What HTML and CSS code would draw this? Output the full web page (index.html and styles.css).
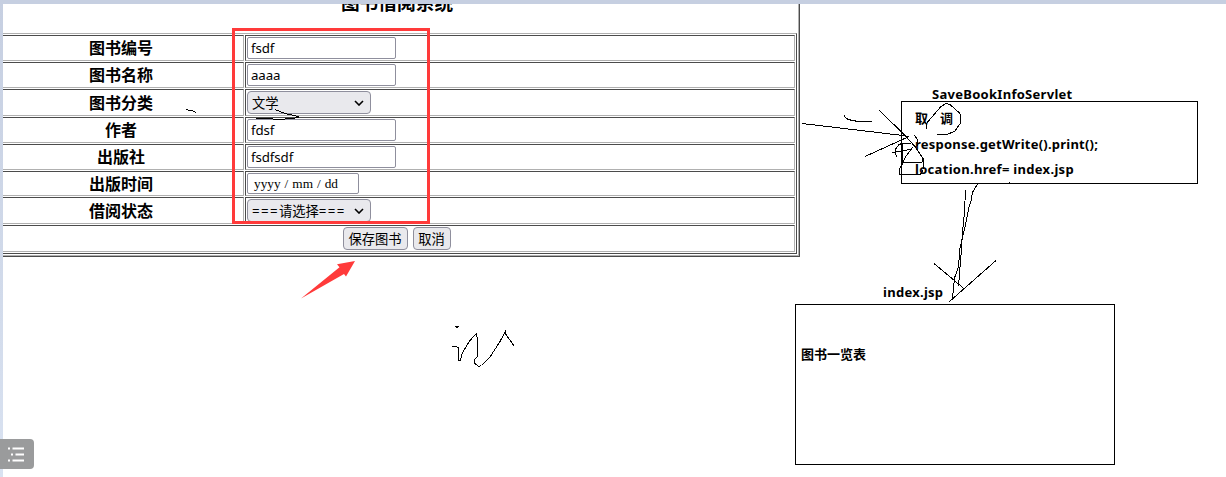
FILE: index.html
```
<!DOCTYPE html>
<html lang="zh-CN">
<head>
<meta charset="utf-8">
<title>图书借阅系统</title>
<link rel="stylesheet" href="styles.css">
</head>
<body>
<div class="screen">
  <main class="form-panel">
    <h3 class="title">图书借阅系统</h3>
    <table class="book-table">
      <colgroup><col class="label-col"><col></colgroup>
      <tr class="h26"><th>图书编号</th><td><div class="field input">fsdf</div></td></tr>
      <tr class="h26"><th>图书名称</th><td><div class="field input">aaaa</div></td></tr>
      <tr class="h27"><th>图书分类</th><td><div class="field select"><span>文学</span><svg class="chevron" viewBox="0 0 10 6"><path d="M1 1l4 4 4-4"/></svg></div></td></tr>
      <tr class="h26"><th>作者</th><td><div class="field input">fdsf</div></td></tr>
      <tr class="h26"><th>出版社</th><td><div class="field input">fsdfsdf</div></td></tr>
      <tr class="h25"><th>出版时间</th><td><div class="field date"><span>yyyy</span><span>/</span><span>mm</span><span>/</span><span>dd</span></div></td></tr>
      <tr class="h27"><th>借阅状态</th><td><div class="field select"><span><span class="dashes">===</span>请选择<span class="dashes">===</span></span><svg class="chevron" viewBox="0 0 10 6"><path d="M1 1l4 4 4-4"/></svg></div></td></tr>
      <tr class="h27"><td colspan="2"><div class="actions"><div class="button save">保存图书</div><div class="button cancel">取消</div></div></td></tr>
    </table>
  </main>

  <div class="note servlet-title">SaveBookInfoServlet</div>
  <div class="node servlet"></div>
  <div class="note take">取</div>
  <div class="note call">调</div>
  <div class="note response">response.getWrite().print();</div>
  <div class="note location">location.href= index.jsp</div>
  <div class="note page-title">index.jsp</div>
  <div class="node page"></div>
  <div class="note list-title">图书一览表</div>

  <div class="highlight"></div>
  <svg class="ink" viewBox="0 0 1226 477">
    <path class="arrow" d="M355 261L337 264.3 339.5 267.3 301 298.5 344 274 346 276.5Z"/>
    <g class="strokes">
      <path d="M186 109.5L190 110.5 193 111 196 112.5"/>
      <path d="M275 109.5L280 111.5 285 113.5 294 115.5 298.5 116.5 298 117.5 293 118.5 278 119.5 267 118.5 256 118.5"/>
      <path d="M802 123.5L903 135.5 909 136.5"/>
      <path d="M844.5 115.5L845 117 848 119.5 858 121.5 872 121.5"/>
      <path d="M879.5 110.5L903 133.5 915 146.5 923 158.5 922 162.5 902.5 162.5"/>
      <path d="M865 156.5L909 136.5"/>
      <path d="M892 152.5L904 150.5 912 149"/>
      <path d="M914.5 135.5L917 139 917 146"/>
      <path d="M911 143.5L902 143.5 899 144.5 895.5 149 895.5 154 897.5 157.5"/>
      <path d="M902.5 143V163L906 156 913 147"/>
      <path d="M903 163L899.5 169 899.5 174.5 920.5 174.5 923 170 923.5 158"/>
      <path d="M926.5 128.5L926.5 123.5 929 120.5 941 106.5 946 103.5 950 104.5 960 113.5 960.5 123 955 131 947 134.5 937 134.5"/>
      <path d="M965.5 190L964.5 212 962.5 232 961 255 958.5 286"/>
      <path d="M977.5 184L972.5 192.5 971 201 969 207 965 227 960 248 958.5 267 954.5 278 952.5 298"/>
      <path d="M934 263.5L964.5 289"/>
      <path d="M996 260.5L949.5 301.5"/>
      <path d="M1009 182.5L1010 182.5"/>
      <path d="M455 326.5L458 326.5 456.5 328"/>
      <path d="M452 346.5L456.5 346.5 458.5 348 458.5 360.5 460.5 360.5 462.5 352.5 469.5 341 476.5 333.5 477.5 340 477.5 356.5 474.5 359.5 475 363.5 478.5 366.5 481.5 365.5 490 357 500 341.5 505 332 505 330 505 333 509.5 339.5 514.5 346.5"/>
    </g>
  </svg>
  <div class="frame-top"></div>
  <div class="frame-left"></div>
  <div class="outline-tab">
    <svg viewBox="0 0 17 15"><path d="M0 1.5h2M4.5 1.5H16M3 7.5h2M7.5 7.5H16M0 13.5h2M4.5 13.5H16"/></svg>
  </div>
</div>
</body>
</html>
```
FILE: styles.css
```
* { box-sizing: border-box; }
body {
  margin: 0;
  background: #fff;
  color: #000;
  font-family: "Noto Sans", "Noto Sans CJK SC", sans-serif;
}
.screen {
  position: relative;
  width: 1226px;
  height: 477px;
  overflow: hidden;
}
.form-panel {
  width: 800px;
  height: 257px;
  overflow: hidden;
  border: solid #4b4b4b;
  border-width: 0 1px 1px 0;
  box-shadow: inset -1px -1px #b0b0b0;
}
.title {
  height: 33px;
  margin: 0;
  padding-right: 5px;
  font-size: 18.72px;
  line-height: 6px;
  text-align: center;
}
.book-table {
  width: 801px;
  margin-left: -4px;
  table-layout: fixed;
  border-collapse: separate;
  border-spacing: 1px;
  border: 1px solid;
  border-color: #b0b0b0 #4b4b4b #4b4b4b #b0b0b0;
}
.label-col { width: 246px; }
.book-table th, .book-table td {
  padding: 0 1px;
  border: 1px solid;
  border-color: #4b4b4b #b0b0b0 #b0b0b0 #4b4b4b;
  line-height: 20px;
  font-size: 16px;
  vertical-align: middle;
}
.h25 { height: 25px; }
.h26 { height: 26px; }
.h27 { height: 27px; }
.field {
  display: flex;
  align-items: center;
  border: 1px solid #8f8f9d;
  border-radius: 2px;
  font-size: 13.3px;
  line-height: 18px;
  white-space: nowrap;
}
.input { width: 149px; height: 22px; padding: 0 3px; letter-spacing: -0.1px; }
.select {
  width: 124px;
  height: 23px;
  padding: 0 6px 0 4px;
  justify-content: space-between;
  background: #e9e9ed;
  border-radius: 4px;
}
.dashes { letter-spacing: 1.35px; }
.chevron { width: 10px; height: 6px; fill: none; stroke: #000; stroke-width: 1.6; }
.date {
  width: 112px;
  height: 21px;
  gap: 4px;
  padding-left: 6px;
  font-family: "Liberation Serif", serif;
}
.actions { display: flex; justify-content: center; gap: 5px; }
.button {
  height: 23px;
  border: 1px solid #8f8f9d;
  border-radius: 4px;
  background: #e9e9ed;
  font-size: 13.3px;
  line-height: 22px;
  text-align: center;
}
.save { width: 65px; }
.cancel { width: 38px; }
.node { position: absolute; border: 1px solid #000; }
.servlet { left: 901px; top: 101px; width: 297px; height: 83px; }
.page { left: 795px; top: 304px; width: 320px; height: 161px; }
.note {
  position: absolute;
  font-size: 13px;
  font-weight: bold;
  line-height: 18px;
  white-space: nowrap;
}
.servlet-title { left: 932px; top: 85px; letter-spacing: 0.28px; }
.take { left: 915px; top: 109px; }
.call { left: 940px; top: 109px; }
.response { left: 915px; top: 135px; letter-spacing: 0.23px; }
.location { left: 915px; top: 160px; letter-spacing: 0.3px; }
.page-title { left: 883px; top: 283px; letter-spacing: 0.28px; }
.list-title { left: 801px; top: 345px; }
.highlight {
  position: absolute;
  left: 232px;
  top: 28px;
  width: 198px;
  height: 196px;
  border: 3px solid #ff3a3a;
}
.ink { position: absolute; left: 0; top: 0; width: 1226px; height: 477px; }
.arrow { fill: #ff3a3a; }
.strokes { fill: none; stroke: #000; stroke-width: 1; shape-rendering: crispEdges; }
.frame-top { position: absolute; left: 0; top: 0; width: 1226px; height: 4px; background: #c6cfe1; }
.frame-left {
  position: absolute;
  left: 0;
  top: 0;
  width: 3px;
  height: 477px;
  background: linear-gradient(#c6cfe1, #d9e2f1);
}
.outline-tab {
  position: absolute;
  left: 0;
  top: 439px;
  display: flex;
  align-items: center;
  width: 34px;
  height: 30px;
  padding-left: 8px;
  border-radius: 0 4px 4px 0;
  background: #9a9b9c;
}
.outline-tab svg { width: 17px; height: 15px; stroke: #fff; stroke-width: 2; }
```
